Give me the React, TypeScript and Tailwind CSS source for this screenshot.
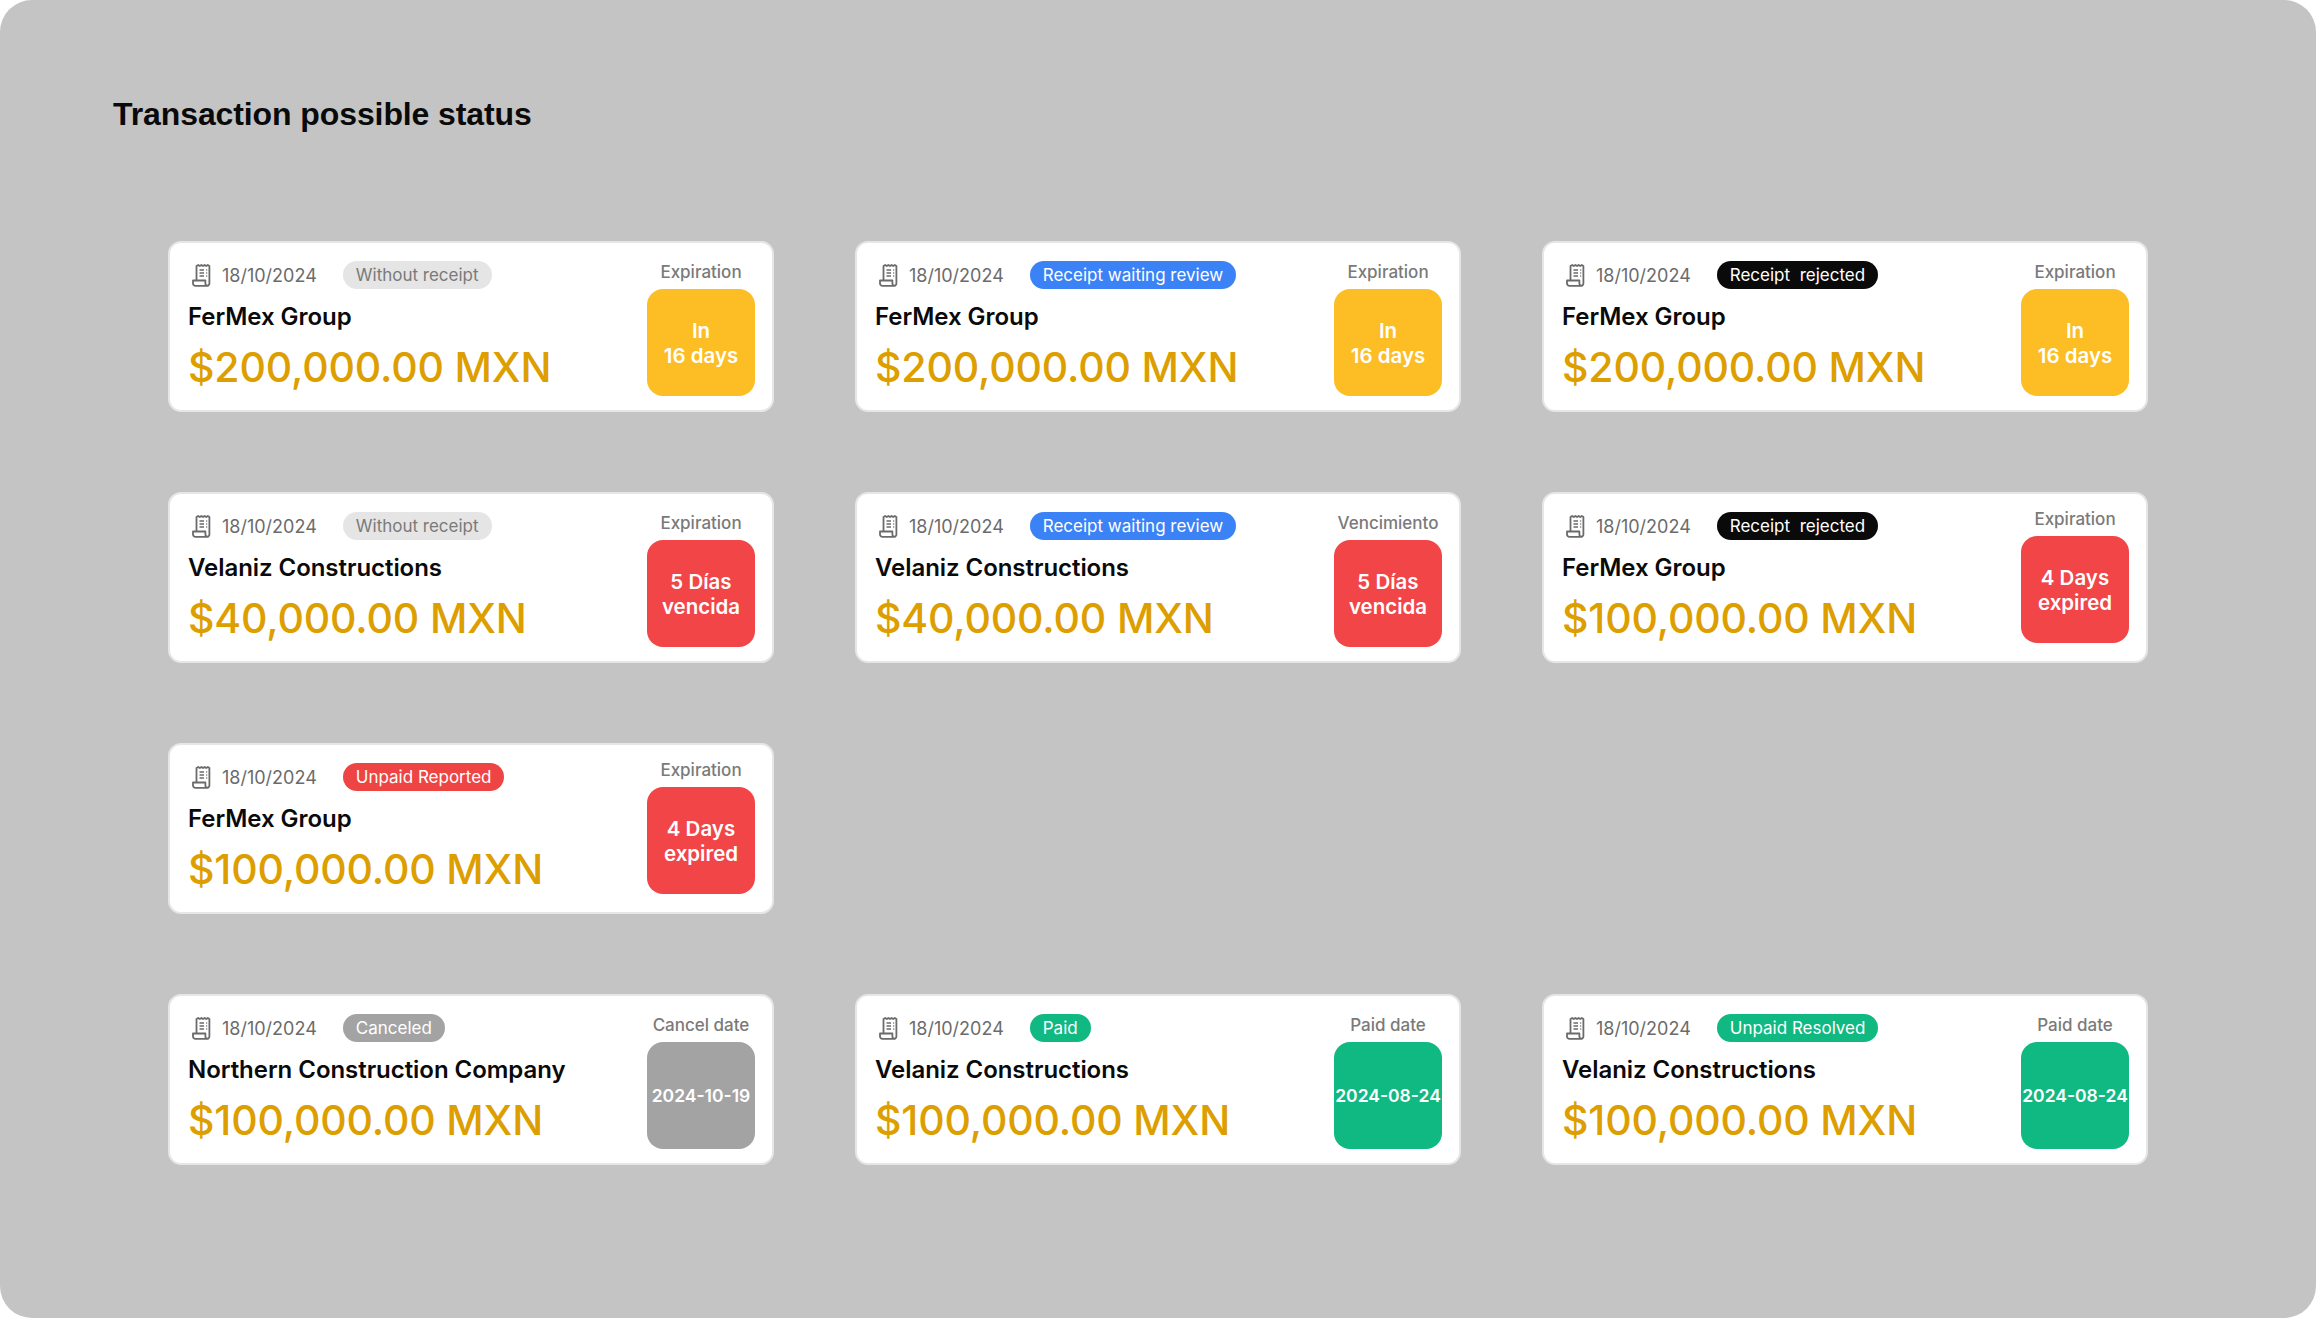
type Tone = 'amber' | 'red' | 'gray' | 'green';
type Pill = 'none' | 'review' | 'rejected' | 'unpaid' | 'canceled' | 'paid';

type Transaction = {
  pill: Pill;
  status: string;
  name: string;
  amount: string;
  label: string;
  lines: string[];
  tone: Tone;
  raised?: boolean;
  newRow?: boolean;
};

const pillClass: Record<Pill, string> = {
  none: 'bg-[#e5e5e5] text-[#7a7a7a]',
  review: 'bg-[#3b82f6] text-white',
  rejected: 'bg-[#0a0a0a] text-white',
  unpaid: 'bg-[#ef4444] text-white',
  canceled: 'bg-[#a3a3a3] text-white',
  paid: 'bg-[#10b981] text-white',
};

const toneClass: Record<Tone, string> = {
  amber: 'bg-[#fdbd24]',
  red: 'bg-[#f24548]',
  gray: 'bg-[#a3a3a3]',
  green: 'bg-[#10b981]',
};

const transactions: Transaction[] = [
  { pill: 'none', status: 'Without receipt', name: 'FerMex Group', amount: '$200,000.00 MXN', label: 'Expiration', lines: ['In', '16 days'], tone: 'amber' },
  { pill: 'review', status: 'Receipt waiting review', name: 'FerMex Group', amount: '$200,000.00 MXN', label: 'Expiration', lines: ['In', '16 days'], tone: 'amber' },
  { pill: 'rejected', status: 'Receipt  rejected', name: 'FerMex Group', amount: '$200,000.00 MXN', label: 'Expiration', lines: ['In', '16 days'], tone: 'amber' },
  { pill: 'none', status: 'Without receipt', name: 'Velaniz Constructions', amount: '$40,000.00 MXN', label: 'Expiration', lines: ['5 Días', 'vencida'], tone: 'red' },
  { pill: 'review', status: 'Receipt waiting review', name: 'Velaniz Constructions', amount: '$40,000.00 MXN', label: 'Vencimiento', lines: ['5 Días', 'vencida'], tone: 'red' },
  { pill: 'rejected', status: 'Receipt  rejected', name: 'FerMex Group', amount: '$100,000.00 MXN', label: 'Expiration', lines: ['4 Days', 'expired'], tone: 'red', raised: true },
  { pill: 'unpaid', status: 'Unpaid Reported', name: 'FerMex Group', amount: '$100,000.00 MXN', label: 'Expiration', lines: ['4 Days', 'expired'], tone: 'red', raised: true },
  { pill: 'canceled', status: 'Canceled', name: 'Northern Construction Company', amount: '$100,000.00 MXN', label: 'Cancel date', lines: ['2024-10-19'], tone: 'gray', newRow: true },
  { pill: 'paid', status: 'Paid', name: 'Velaniz Constructions', amount: '$100,000.00 MXN', label: 'Paid date', lines: ['2024-08-24'], tone: 'green' },
  { pill: 'paid', status: 'Unpaid Resolved', name: 'Velaniz Constructions', amount: '$100,000.00 MXN', label: 'Paid date', lines: ['2024-08-24'], tone: 'green' },
];

const ReceiptIcon = () => (
  <svg width="21" height="23" viewBox="0 0 21 23" fill="none" stroke="#6b6b6b" strokeWidth="1.8" strokeLinejoin="round" strokeLinecap="round" className="ml-[4px] shrink-0">
    <path d="M4.5 16.5V2l1.7-1 1.6 1 1.6-1 1.6 1 1.6-1 1.6 1 1.6-1 1.6 1v17.5a2.4 2.4 0 0 1-2.4 2.4H3.4A2.4 2.4 0 0 1 1 19.5v-3h12.4v3a2.4 2.4 0 0 0 2.4 2.4" />
    <path d="M7.5 6h4.5M7.5 9h4.5M7.5 12h4.5M14.2 6h1M14.2 9h1M14.2 12h1" strokeWidth="1.6" strokeLinecap="butt" />
  </svg>
);

const TransactionCard = ({ item }: { item: Transaction }) => (
  <div className={`h-[171px] flex justify-between bg-white border-2 border-[#e6e6e6] rounded-[13px] pl-[18px] pr-[17px] ${item.newRow ? 'col-start-1' : ''}`}>
    <div className="min-w-0">
      <div className="flex items-center h-[28px] mt-[18px]">
        <ReceiptIcon />
        <span className="ml-[9px] text-[18px] text-[#6b6b6b]">18/10/2024</span>
        <span className={`ml-[26px] h-[28px] px-[13px] pt-[1px] flex items-center rounded-full text-[17px] whitespace-pre ${pillClass[item.pill]}`}>{item.status}</span>
      </div>
      <div className="mt-[12px] text-[24px] leading-[32px] font-semibold text-[#0a0a0a] tracking-[-0.05px]">{item.name}</div>
      <div className="mt-[9px] text-[41px] leading-[50px] font-medium text-[#dd9e00] whitespace-nowrap tracking-[-0.15px]">{item.amount}</div>
    </div>
    <div className={`flex flex-col items-center w-[108px] shrink-0 ${item.raised ? 'mt-[14px]' : 'mt-[18px]'}`}>
      <div className="text-[17px] leading-[22px] font-medium text-[#7a7a7a] whitespace-nowrap">{item.label}</div>
      <div className={`mt-[6px] w-[108px] h-[107px] rounded-[16px] flex flex-col items-center justify-center text-white font-semibold ${item.lines.length > 1 ? 'text-[20.5px] leading-[25px]' : 'text-[17.5px] leading-[24px] whitespace-nowrap'} ${toneClass[item.tone]}`}>
        {item.lines.map((line) => (
          <span key={line}>{line}</span>
        ))}
      </div>
    </div>
  </div>
);

const App = () => (
  <div className="w-[2316px] h-[1318px] bg-white overflow-hidden [font-family:Inter,sans-serif]">
    <div className="h-full bg-[#c4c4c4] rounded-[32px] pt-[95px] pl-[113px]">
      <h1 className="text-[32px] leading-[38px] text-[#0a0a0a] tracking-[-0.1px] [font-family:'Liberation_Sans',sans-serif] font-bold">Transaction possible status</h1>
      <div className="mt-[108px] ml-[55px] grid grid-cols-[606px_606px_606px] gap-x-[81px] gap-y-[80px]">
        {transactions.map((item, i) => (
          <TransactionCard key={i} item={item} />
        ))}
      </div>
    </div>
  </div>
);

export default App;
